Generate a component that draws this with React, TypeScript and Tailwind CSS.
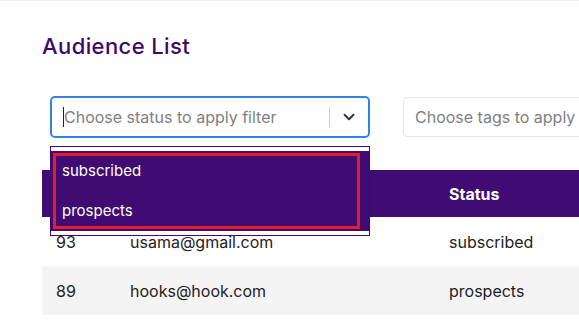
import { ChevronDown } from "lucide-react";

const rows = [
  { id: 93, email: "usama@gmail.com", status: "subscribed" },
  { id: 89, email: "hooks@hook.com", status: "prospects" },
];

export default function App() {
  return (
    <div className="min-h-[326px] w-[579px] overflow-hidden border-t border-[#eeeeee] bg-white font-['Inter',sans-serif]">
      <div className="pl-[42px] pt-[31px]">
        <h1 className="text-[22px] font-medium leading-[28px] tracking-[0.4px] text-[#3c0a6e]">Audience List</h1>

        {/* filters */}
        <div className="relative mt-[36px] flex items-center pl-[8px]">
          <div className="flex h-[42px] w-[320px] shrink-0 items-center rounded-[5px] border-2 border-[#2f86ea] bg-white">
            <div className="flex flex-1 items-center pl-[11px]">
              <span className="h-[20px] w-px bg-[#222]" />
              <span className="text-[16px] text-[#808080]">Choose status to apply filter</span>
            </div>
            <span className="h-[20px] w-px bg-[#cccccc]" />
            <div className="flex w-[38px] justify-center">
              <ChevronDown size={18} strokeWidth={2.6} className="text-[#333]" />
            </div>
          </div>

          <div className="ml-[33px] flex h-[40px] w-[260px] shrink-0 items-center overflow-hidden rounded-[4px] border border-[#e8e8e8] bg-white pl-[11px]">
            <span className="whitespace-nowrap text-[16px] text-[#808080]">Choose tags to apply filter</span>
          </div>

          {/* open menu */}
          <div className="absolute left-[8px] top-[50px] z-10 w-[320px] border border-[#3c0a6e] bg-white py-[4px]">
            <div className="relative bg-[#400b72]">
              <div className="flex h-[40px] items-center px-[11px] text-[15px] text-white">subscribed</div>
              <div className="flex h-[40px] items-center px-[11px] text-[15px] text-white">prospects</div>
              <div className="absolute bottom-[2px] left-[2px] right-[9px] top-[2px] border-[3px] border-[#e41d2a]" />
            </div>
          </div>
        </div>

        {/* table */}
        <table className="mt-[32px] w-[600px] table-fixed border-collapse text-left text-[16px]">
          <thead>
            <tr className="h-[47px] bg-[#400b72] text-white">
              <th className="w-[88px] pl-[14px] font-bold"></th>
              <th className="w-[319px] font-bold"></th>
              <th className="font-bold">Status</th>
            </tr>
          </thead>
          <tbody>
            {rows.map((r, i) => (
              <tr key={r.id} className={i % 2 ? "h-[49px] bg-[#f4f4f4]" : "h-[49px] bg-white"}>
                <td className="pl-[14px] text-[#222]">{r.id}</td>
                <td className="text-[#222]">{r.email}</td>
                <td className="text-[#222]">{r.status}</td>
              </tr>
            ))}
          </tbody>
        </table>
      </div>
    </div>
  );
}
